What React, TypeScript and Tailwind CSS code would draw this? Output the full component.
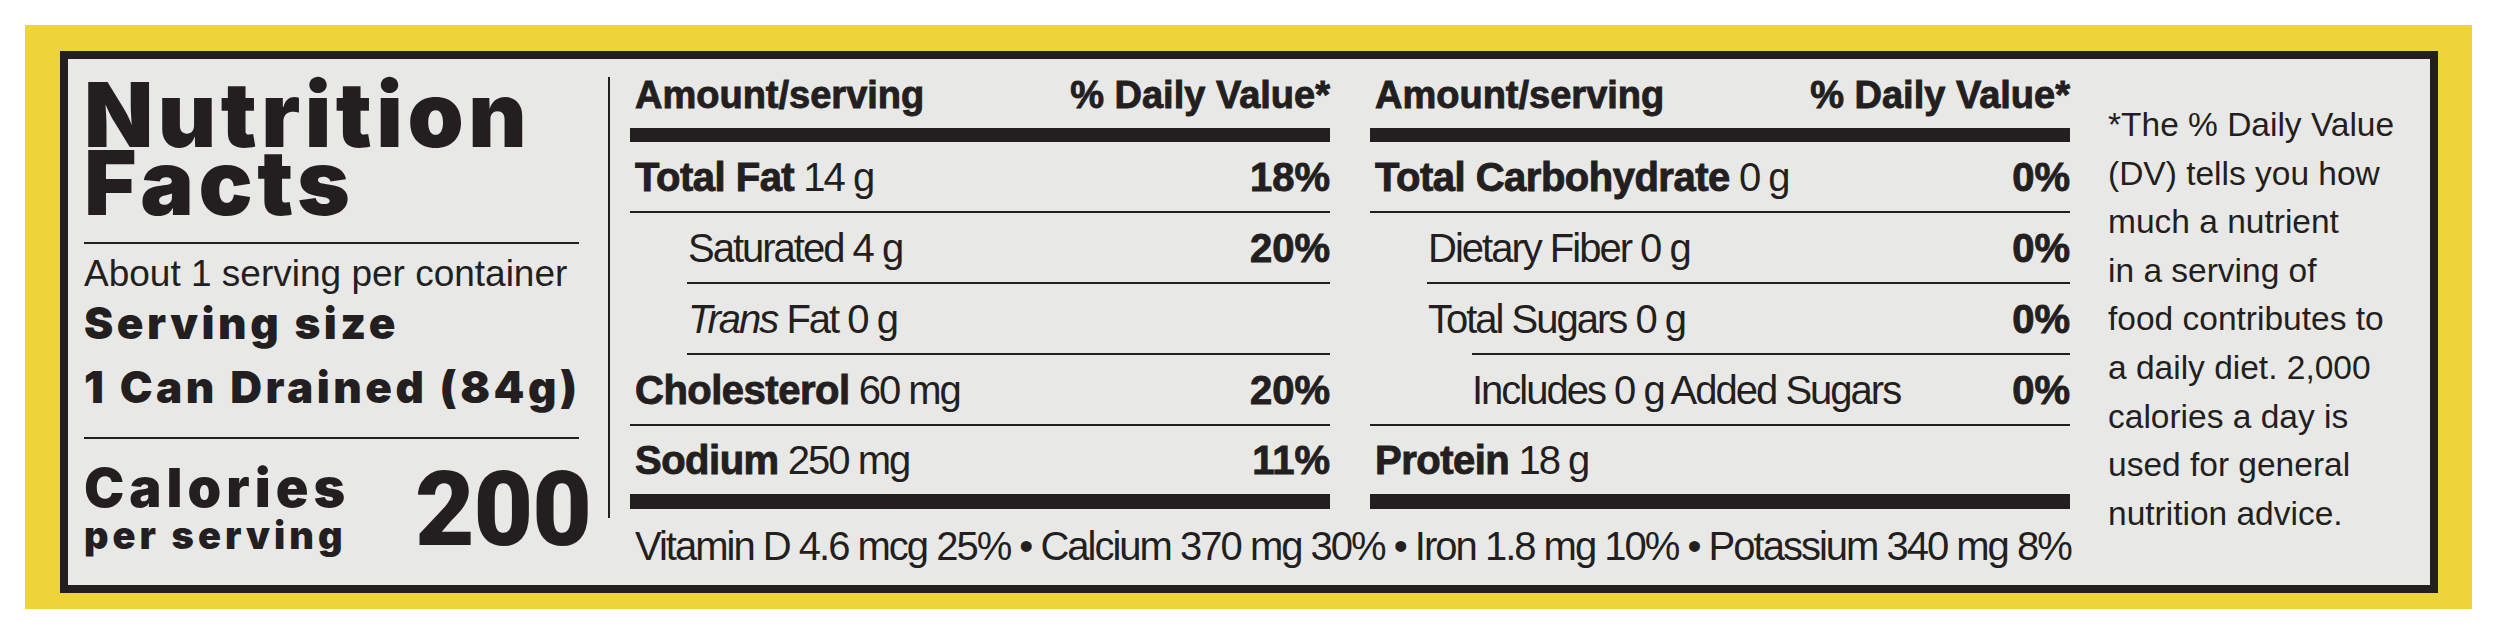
import type { ReactNode } from "react";

type Row = {
  label: string;
  amount?: string;
  italic?: string;
  dv?: string;
  bold?: boolean;
  textIndent: number;
  lineIndent: number | null; // null = no rule under the row
  last?: boolean;
};

const leftRows: Row[] = [
  { label: "Total Fat", amount: "14 g", dv: "18%", bold: true, textIndent: 0, lineIndent: 0 },
  { label: "Saturated", amount: "4 g", dv: "20%", textIndent: 1, lineIndent: 1 },
  { label: "Fat", italic: "Trans", amount: "0 g", textIndent: 1, lineIndent: 1 },
  { label: "Cholesterol", amount: "60 mg", dv: "20%", bold: true, textIndent: 0, lineIndent: 0 },
  { label: "Sodium", amount: "250 mg", dv: "11%", bold: true, textIndent: 0, lineIndent: null, last: true },
];

const rightRows: Row[] = [
  { label: "Total Carbohydrate", amount: "0 g", dv: "0%", bold: true, textIndent: 0, lineIndent: 0 },
  { label: "Dietary Fiber", amount: "0 g", dv: "0%", textIndent: 1, lineIndent: 1 },
  { label: "Total Sugars", amount: "0 g", dv: "0%", textIndent: 1, lineIndent: 2 },
  { label: "Includes 0 g Added Sugars", dv: "0%", textIndent: 2, lineIndent: 0 },
  { label: "Protein", amount: "18 g", bold: true, textIndent: 0, lineIndent: null, last: true },
];

const textPad = ["pl-[5px]", "pl-[58px]", "pl-[102px]"];
const rulePad = ["ml-0", "ml-[57px]", "ml-[102px]"];

// heavier than plain bold, close to the condensed black face on the label
const heavyBold = "font-bold [-webkit-text-stroke:0.9px_#231f20]";

function NutrientRow({ row }: { row: Row }) {
  return (
    <div className={row.last ? "flex h-[68px] flex-col" : "flex h-[71px] flex-col"}>
      <div className={`flex flex-1 items-center justify-between ${textPad[row.textIndent]}`}>
        <div className="whitespace-nowrap text-[40px] leading-none">
          {row.bold ? (
            <span className={`${heavyBold} tracking-[-0.5px]`}>{row.label}</span>
          ) : row.italic ? (
            <span className="tracking-[-2px]">
              <i>{row.italic}</i> {row.label}
            </span>
          ) : (
            <span className="tracking-[-2px]">{row.label}</span>
          )}
          {row.amount ? <span className="tracking-[-2px]"> {row.amount}</span> : null}
        </div>
        {row.dv ? <div className={`text-[40px] leading-none ${heavyBold}`}>{row.dv}</div> : null}
      </div>
      {row.lineIndent !== null ? <div className={`h-[2px] bg-[#231f20] ${rulePad[row.lineIndent]}`} /> : null}
    </div>
  );
}

function NutrientTable({ rows }: { rows: Row[] }) {
  return (
    <div className="flex flex-col">
      <div className={`flex h-[69px] items-end justify-between pb-[14px] pl-[5px] text-[38px] leading-none ${heavyBold}`}>
        <span>Amount/serving</span>
        <span>% Daily Value*</span>
      </div>
      <div className="h-[14px] bg-[#231f20]" />
      {rows.map((row) => (
        <NutrientRow key={row.label + (row.amount ?? "")} row={row} />
      ))}
      <div className="h-[15px] bg-[#231f20]" />
    </div>
  );
}

function Heavy({ className, children }: { className: string; children: ReactNode }) {
  return <div className={`font-['Inter','Liberation_Sans',sans-serif] font-black ${className}`}>{children}</div>;
}

function LabelHeader() {
  return (
    <div className="flex w-[540px] shrink-0 flex-col pl-[16px] pr-[29px] pt-[22px]">
      <Heavy className="text-[90px] leading-[68px] tracking-[4.5px]">
        <div>Nutrition</div>
        <div>Facts</div>
      </Heavy>
      <div className="mt-[25px] h-[2px] bg-[#231f20]" />
      <div className="mt-[10px] whitespace-nowrap font-['Liberation_Sans',sans-serif] text-[37px] leading-[40px]">
        About 1 serving per container
      </div>
      <Heavy className="mt-[-3px] whitespace-nowrap text-[44px] leading-[64px] tracking-[3.5px]">
        <div>Serving size</div>
        <div>1 Can Drained (84g)</div>
      </Heavy>
      <div className="mt-[18px] h-[2px] bg-[#231f20]" />
      <div className="mt-[25px] flex items-start justify-between">
        <Heavy className="">
          <div className="text-[54px] leading-[48px] tracking-[5px]">Calories</div>
          <div className="mt-[3px] text-[38px] leading-[40px] tracking-[4px]">per serving</div>
        </Heavy>
        <div className="mr-[-12px] mt-[-6px] font-['Roboto','Liberation_Sans',sans-serif] text-[103px] font-black leading-none tracking-[-1px]">
          200
        </div>
      </div>
    </div>
  );
}

const footnote = [
  "*The % Daily Value",
  "(DV) tells you how",
  "much a nutrient",
  "in a serving of",
  "food contributes to",
  "a daily diet. 2,000",
  "calories a day is",
  "used for general",
  "nutrition advice.",
];

export default function App() {
  return (
    <div className="h-[634px] w-[2497px] bg-white pl-[25px] pt-[25px] text-[#231f20]">
      <div className="h-[584px] w-[2447px] bg-[#eed43b] pl-[35px] pt-[26px]">
        <div className="flex h-[542px] w-[2378px] border-[8px] border-[#231f20] bg-[#e8e8e6]">
          <LabelHeader />
          <div className="mt-[18px] h-[441px] w-[2px] shrink-0 bg-[#231f20]" />
          <div className="ml-[20px] flex w-[1440px] shrink-0 flex-col font-['Liberation_Sans',sans-serif]">
            <div className="grid grid-cols-[700px_700px] gap-x-[40px]">
              <NutrientTable rows={leftRows} />
              <NutrientTable rows={rightRows} />
            </div>
            <div className="mt-[17px] whitespace-nowrap pl-[5px] text-[40px] leading-none tracking-[-2px]">
              Vitamin D 4.6 mcg 25% • Calcium 370 mg 30% • Iron 1.8 mg 10% • Potassium 340 mg 8%
            </div>
          </div>
          <div className="ml-[38px] pt-[42px] font-['Liberation_Sans',sans-serif] text-[33.5px] leading-[48.6px]">
            {footnote.map((line) => (
              <div key={line} className="whitespace-nowrap">
                {line}
              </div>
            ))}
          </div>
        </div>
      </div>
    </div>
  );
}
